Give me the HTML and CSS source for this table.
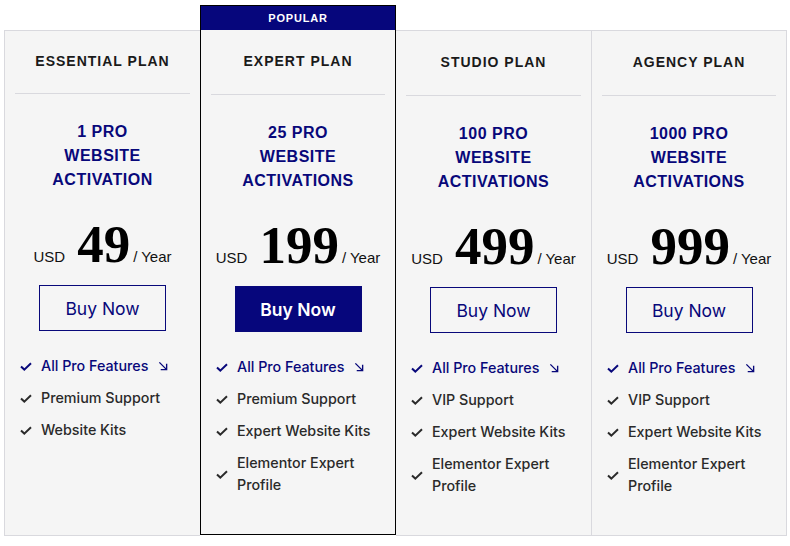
FILE: index.html
```html
<!DOCTYPE html>
<html>
<head>
<meta charset="utf-8">
<link rel="stylesheet" href="styles.css">
</head>
<body>
<div class="table">
  <div class="plan plan-first">
    <div class="plan-body">
      <h2 class="plan-name">ESSENTIAL PLAN</h2>
      <div class="divider"></div>
      <p class="plan-desc">1 PRO<br>WEBSITE<br>ACTIVATION</p>
      <div class="price"><span class="cur">USD</span><span class="amount">49</span><span class="per">/ Year</span></div>
      <a class="btn">Buy Now</a>
      <ul class="features">
        <li class="hl"><svg class="chk" viewBox="0 0 12 9"><path d="M1 4.5 L4.3 7.6 L11 1.2"/></svg><span>All Pro Features</span><svg class="arr" viewBox="0 0 11 11"><path d="M1.5 1.5 L9.5 9.5 M9.5 3 V9.5 H3"/></svg></li>
        <li><svg class="chk" viewBox="0 0 12 9"><path d="M1 4.5 L4.3 7.6 L11 1.2"/></svg><span>Premium Support</span></li>
        <li><svg class="chk" viewBox="0 0 12 9"><path d="M1 4.5 L4.3 7.6 L11 1.2"/></svg><span>Website Kits</span></li>
      </ul>
    </div>
  </div>
  <div class="plan plan-popular">
    <div class="badge">POPULAR</div>
    <div class="plan-body">
      <h2 class="plan-name">EXPERT PLAN</h2>
      <div class="divider"></div>
      <p class="plan-desc">25 PRO<br>WEBSITE<br>ACTIVATIONS</p>
      <div class="price"><span class="cur">USD</span><span class="amount">199</span><span class="per">/ Year</span></div>
      <a class="btn btn-solid">Buy Now</a>
      <ul class="features">
        <li class="hl"><svg class="chk" viewBox="0 0 12 9"><path d="M1 4.5 L4.3 7.6 L11 1.2"/></svg><span>All Pro Features</span><svg class="arr" viewBox="0 0 11 11"><path d="M1.5 1.5 L9.5 9.5 M9.5 3 V9.5 H3"/></svg></li>
        <li><svg class="chk" viewBox="0 0 12 9"><path d="M1 4.5 L4.3 7.6 L11 1.2"/></svg><span>Premium Support</span></li>
        <li><svg class="chk" viewBox="0 0 12 9"><path d="M1 4.5 L4.3 7.6 L11 1.2"/></svg><span>Expert Website Kits</span></li>
        <li><svg class="chk" viewBox="0 0 12 9"><path d="M1 4.5 L4.3 7.6 L11 1.2"/></svg><span>Elementor Expert<br>Profile</span></li>
      </ul>
    </div>
  </div>
  <div class="plan plan-shift">
    <div class="plan-body">
      <h2 class="plan-name">STUDIO PLAN</h2>
      <div class="divider"></div>
      <p class="plan-desc">100 PRO<br>WEBSITE<br>ACTIVATIONS</p>
      <div class="price"><span class="cur">USD</span><span class="amount">499</span><span class="per">/ Year</span></div>
      <a class="btn">Buy Now</a>
      <ul class="features">
        <li class="hl"><svg class="chk" viewBox="0 0 12 9"><path d="M1 4.5 L4.3 7.6 L11 1.2"/></svg><span>All Pro Features</span><svg class="arr" viewBox="0 0 11 11"><path d="M1.5 1.5 L9.5 9.5 M9.5 3 V9.5 H3"/></svg></li>
        <li><svg class="chk" viewBox="0 0 12 9"><path d="M1 4.5 L4.3 7.6 L11 1.2"/></svg><span>VIP Support</span></li>
        <li><svg class="chk" viewBox="0 0 12 9"><path d="M1 4.5 L4.3 7.6 L11 1.2"/></svg><span>Expert Website Kits</span></li>
        <li><svg class="chk" viewBox="0 0 12 9"><path d="M1 4.5 L4.3 7.6 L11 1.2"/></svg><span>Elementor Expert<br>Profile</span></li>
      </ul>
    </div>
  </div>
  <div class="plan plan-shift plan-last">
    <div class="plan-body">
      <h2 class="plan-name">AGENCY PLAN</h2>
      <div class="divider"></div>
      <p class="plan-desc">1000 PRO<br>WEBSITE<br>ACTIVATIONS</p>
      <div class="price"><span class="cur">USD</span><span class="amount">999</span><span class="per">/ Year</span></div>
      <a class="btn">Buy Now</a>
      <ul class="features">
        <li class="hl"><svg class="chk" viewBox="0 0 12 9"><path d="M1 4.5 L4.3 7.6 L11 1.2"/></svg><span>All Pro Features</span><svg class="arr" viewBox="0 0 11 11"><path d="M1.5 1.5 L9.5 9.5 M9.5 3 V9.5 H3"/></svg></li>
        <li><svg class="chk" viewBox="0 0 12 9"><path d="M1 4.5 L4.3 7.6 L11 1.2"/></svg><span>VIP Support</span></li>
        <li><svg class="chk" viewBox="0 0 12 9"><path d="M1 4.5 L4.3 7.6 L11 1.2"/></svg><span>Expert Website Kits</span></li>
        <li><svg class="chk" viewBox="0 0 12 9"><path d="M1 4.5 L4.3 7.6 L11 1.2"/></svg><span>Elementor Expert<br>Profile</span></li>
      </ul>
    </div>
  </div>
</div>
</body>
</html>
```
FILE: styles.css
```css
* { box-sizing: border-box; }
html, body { margin: 0; padding: 0; background: #fff; }
body { font-family: "Liberation Sans", Arial, sans-serif; }

.table {
  display: flex;
  align-items: stretch;
  padding: 5px 0 0 4px;
  height: 536px;
}

.plan {
  width: 196px;
  margin-top: 25px;
  background: #f5f5f5;
  border-top: 1px solid #d9d9de;
  border-bottom: 1px solid #d9d9de;
  display: flex;
  flex-direction: column;
}
.plan-first { border-left: 1px solid #d9d9de; }
.plan-shift { border-right: 1px solid #d9d9de; }
.plan-last { width: 195px; }

.plan-popular {
  margin-top: 0;
  border: 1px solid #000;
  margin-bottom: 1px;
}
.badge {
  height: 24px;
  background: #06067c;
  color: #fff;
  font-size: 11px;
  font-weight: 700;
  letter-spacing: 0.8px;
  text-align: center;
  line-height: 24px;
}

.plan-body {
  flex: 1;
  display: flex;
  flex-direction: column;
  align-items: center;
}
.plan-shift .plan-body,
.plan-popular .plan-body { padding-top: 1px; }

.plan-name {
  margin: 0;
  padding: 20px 0 22px;
  font-size: 14px;
  line-height: 20px;
  font-weight: 700;
  letter-spacing: 1px;
  color: #1a1a1a;
}
.divider {
  align-self: stretch;
  height: 1px;
  margin: 0 10px;
  background: #d9d9de;
}
.plan-shift .divider,
.plan-popular .divider { margin-top: 1px; }

.plan-desc {
  margin: 26px 0 0;
  text-align: center;
  font-size: 16px;
  line-height: 24px;
  font-weight: 700;
  letter-spacing: 0.5px;
  color: #08087a;
}

.price {
  margin-top: 27px;
  display: flex;
  align-items: baseline;
  height: 51px;
  color: #111;
}
.cur { font-size: 15px; margin-right: 12px; }
.amount {
  font-family: "Liberation Serif", "Times New Roman", serif;
  font-weight: 700;
  font-size: 53px;
  line-height: 51px;
  color: #000;
  margin-right: 3px;
}
.per { font-size: 15px; }

.btn {
  margin-top: 15px;
  width: 127px;
  height: 46px;
  border: 1px solid #08087a;
  color: #08087a;
  font-family: Inter, "Liberation Sans", sans-serif;
  font-size: 17.5px;
  display: flex;
  align-items: center;
  justify-content: center;
}
.btn-solid {
  background: #06067c;
  color: #fff;
  font-weight: 600;
}

.features {
  list-style: none;
  margin: 24px 0 0;
  padding: 0 0 0 15px;
  align-self: stretch;
  display: flex;
  flex-direction: column;
  gap: 10px;
  font-family: Inter, "Liberation Sans", sans-serif;
  font-size: 14.3px;
  font-weight: 500;
  color: #2a2a2a;
}
.features li {
  display: flex;
  align-items: center;
  line-height: 22px;
}
.chk {
  width: 12px;
  height: 9px;
  margin-right: 9px;
  flex: none;
}
.chk path { fill: none; stroke: #2a2a2a; stroke-width: 2; }
.hl { color: #08087a; }
.hl .chk path { stroke: #08087a; }
.arr {
  width: 10px;
  height: 10px;
  margin-left: 10px;
}
.arr path { fill: none; stroke: #08087a; stroke-width: 1.5; }
```
